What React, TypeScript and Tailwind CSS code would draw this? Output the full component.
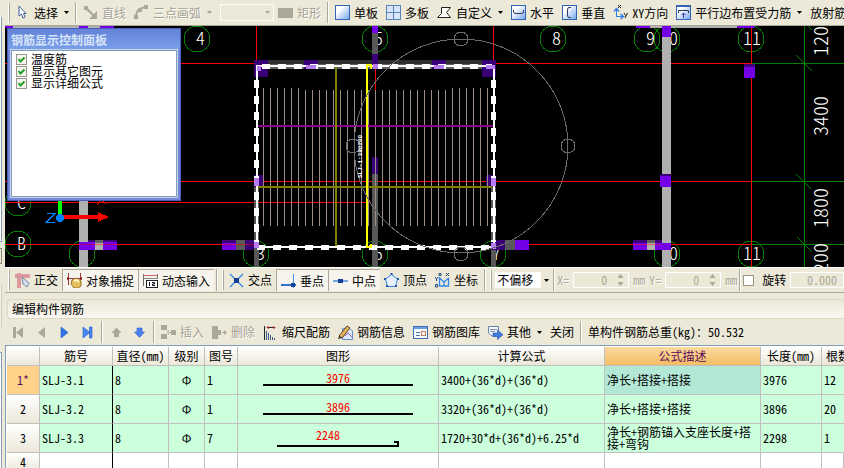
import { useState } from "react";
import type { ReactNode } from "react";

// ---------- icons ----------
const Icon = ({ children }: { children: ReactNode }) => (
  <svg width="15" height="15" viewBox="0 0 15 15" fill="none" className="shrink-0" aria-hidden="true">
    {children}
  </svg>
);

const CursorIcon = () => (
  <Icon>
    <path d="M4 1 L4 11 L6.5 9 L8 13 L10 12 L8.5 8.5 L11 8.5 Z" fill="#fff" stroke="#3b5f97" />
  </Icon>
);
const LineIcon = () => (
  <Icon>
    <rect x="1" y="1" width="4" height="4" fill="#aca899" />
    <path d="M4 4 L12 12" stroke="#aca899" strokeWidth="2.4" />
    <path d="M14 6 V14 H6 Z" fill="#aca899" />
  </Icon>
);
const ArcIcon = () => (
  <Icon>
    <path d="M2 12 C2 6 5 3 12 2" stroke="#aca899" strokeWidth="2" />
    <rect x="0" y="10" width="4" height="4" fill="#aca899" />
    <rect x="4" y="3" width="4" height="4" fill="#aca899" />
    <rect x="10" y="0" width="4" height="4" fill="#aca899" />
  </Icon>
);
const RectIcon = () => (
  <Icon>
    <rect x="0" y="3" width="15" height="10" fill="#aca899" />
  </Icon>
);
const BlueBox = () => (
  <>
    <defs>
      <linearGradient id="blueBox" x1="0" y1="0" x2="1" y2="1">
        <stop offset="0.3" stopColor="#ffffff" />
        <stop offset="1" stopColor="#6fa3ee" />
      </linearGradient>
    </defs>
    <rect x="0.5" y="0.5" width="14" height="14" fill="url(#blueBox)" stroke="#3564b4" />
  </>
);
const SlabIcon = () => (
  <Icon>
    <BlueBox />
  </Icon>
);
const MultiSlabIcon = () => (
  <Icon>
    <rect x="0.5" y="0.5" width="14" height="14" fill="#d8e6fa" stroke="#5b83bd" />
    <path d="M7.5 1 V14 M1 7.5 H14" stroke="#5b83bd" />
  </Icon>
);
const PolygonIcon = () => (
  <Icon>
    <path d="M4.5 2.5 H13.5 L9.5 7.5 L13.5 12.5 H0.5 L4.5 8.5 Z" fill="#fff" stroke="#222" />
  </Icon>
);
const HorizontalIcon = () => (
  <Icon>
    <BlueBox />
    <path d="M2.5 5 V7 Q2.5 8.5 5 8.5 H10 Q12.5 8.5 12.5 7 V5" stroke="#333a55" />
  </Icon>
);
const VerticalIcon = () => (
  <Icon>
    <BlueBox />
    <path d="M9 2.5 H7 Q5.5 2.5 5.5 5 V10 Q5.5 12.5 7 12.5 H9" stroke="#333a55" />
  </Icon>
);
const XYIcon = () => (
  <Icon>
    <path d="M3.5 12 V4 M3.5 11.5 H10" stroke="#2f7de0" />
    <path d="M1 6.5 L3.5 3.5 L6 6.5 M7.5 9 L10.5 11.5 L7.5 14" stroke="#2f7de0" strokeWidth="1.4" />
    <path d="M5 0 L8 3 M8 0 L5 3 M11 8 L12.5 10.5 M14.5 8 L12 13" stroke="#222" />
  </Icon>
);
const ParallelIcon = () => (
  <Icon>
    <BlueBox />
    <path d="M0 1 H15" stroke="#3564b4" strokeWidth="2" />
    <path d="M2.5 8 V5.5 H12.5 V8" stroke="#333a55" />
    <path d="M7.5 13 V8 M5.5 10 L7.5 8 L9.5 10" stroke="#3a3aa0" />
  </Icon>
);

const OrthoIcon = () => (
  <Icon>
    <path d="M0 3 H15 M4 0 V15" stroke="#dc9a9e" strokeWidth="4" />
    <path d="M7 4 L14 10 L12 14 L8 11 Z" fill="#d4dce8" stroke="#7a8ba8" />
  </Icon>
);
const SnapIcon = () => (
  <Icon>
    <path d="M1.5 0 V12 M13.5 0 V12 M0 5.5 H15" stroke="#a33b3b" />
    <path d="M0 4 L3 5.5 L0 7 Z M15 4 L12 5.5 L15 7 Z" fill="#7c1c1c" />
    <path d="M5 7 L9 5 L14 8 L14 13 L11 15 H7 L4 11 Z" fill="#e6c05a" stroke="#99752c" />
    <path d="M7 8 L10 7 L12 9" stroke="#fff2bd" strokeWidth="2" />
  </Icon>
);
const DynamicIcon = () => (
  <Icon>
    <path d="M0.5 1 V13 M14.5 1 V6" stroke="#6c6c6c" />
    <path d="M0 2.5 H15" stroke="#c96a6a" />
    <path d="M0 5.5 H15" stroke="#888" />
    <rect x="3.5" y="7.5" width="11" height="7" fill="#fff" stroke="#222" />
    <path d="M6.5 9 V13 M9 9.5 H11.5 V11 H9.5 V12.5 H12" stroke="#111" />
  </Icon>
);
const CrossIcon = () => (
  <Icon>
    <path d="M1 1 L14 14 M14 1 L1 14" stroke="#2f86e8" strokeWidth="1.3" />
    <rect x="5" y="5" width="5" height="5" fill="#123e94" />
  </Icon>
);
const PerpIcon = () => (
  <Icon>
    <path d="M0 12 H15" stroke="#2f6fd0" strokeWidth="2" />
    <path d="M12.5 1 V15" stroke="#3f97f5" />
    <rect x="10" y="10" width="4" height="4" fill="#123e94" />
  </Icon>
);
const MidIcon = () => (
  <Icon>
    <path d="M0 8 H15" stroke="#3f86e0" strokeWidth="1.4" />
    <rect x="5" y="6" width="5" height="4" fill="#123e94" />
  </Icon>
);
const VertexIcon = () => (
  <Icon>
    <path d="M7.5 1.5 L13.5 6 L11.5 13.5 H3.5 L1.5 6 Z" fill="#e8f1fb" stroke="#2f86e8" />
    <path d="M6.5 0 H8.5 V2 H6.5Z M0 5 H2 V7 H0Z M13 5 H15 V7 H13Z M2 12 H4 V14 H2Z M11 12 H13 V14 H11Z" fill="#2657a8" />
  </Icon>
);
const CoordIcon = () => (
  <Icon>
    <path d="M4.5 4 V13 H13.5 V5 M4.5 5 L9 9 L14 5 M9 9 V13 H4" stroke="#2f86e8" strokeWidth="1.3" />
    <path d="M0 4 L1.5 6 L3 4 M1.5 6 V8 M4 0.5 H6 V2.5 H4 Z M11 0 L14 3 M14 0 L11 3 M0.5 11.5 H2.5 V14 H0.5Z" stroke="#274a7a" />
  </Icon>
);

const FirstIcon = () => (
  <Icon>
    <path d="M2 2 H5 V13 H2Z M12 2 V13 L5 7.5Z" fill="#aca899" />
  </Icon>
);
const PrevIcon = () => (
  <Icon>
    <path d="M11 2 V13 L4 7.5Z" fill="#aca899" />
  </Icon>
);
const NextIcon = () => (
  <Icon>
    <path d="M4 2 V13 L11 7.5Z" fill="#2f74e8" stroke="#1d54c4" strokeWidth="0.6" />
  </Icon>
);
const LastIcon = () => (
  <Icon>
    <path d="M3 2 V13 L10 7.5Z M9.5 2 H12 V13 H9.5Z" fill="#4a8af0" stroke="#1d54c4" strokeWidth="0.6" />
  </Icon>
);
const UpIcon = () => (
  <Icon>
    <path d="M7.5 2.5 L12.5 8 H10 V12 H5 V8 H2.5Z" fill="#aca899" />
  </Icon>
);
const DownIcon = () => (
  <Icon>
    <path d="M7.5 12.5 L12.5 7 H10 V3 H5 V7 H2.5Z" fill="#4a80ea" stroke="#2d5fd0" strokeWidth="0.6" />
  </Icon>
);
const InsertIcon = () => (
  <Icon>
    <path d="M0 0 H6 V5 H0Z M0 9 H6 V14 H0Z M10 5 H15 V10 H10Z M5 7 H10 V8 H5Z M8 5 L5 7.5 L8 10Z" fill="#aca899" />
  </Icon>
);
const DeleteIcon = () => (
  <Icon>
    <path d="M0 1 H6 V5 H9 V10 H6 V14 H0Z M10 7 H15 V8 H10Z M12 5 L15 7.5 L12 10Z" fill="#aca899" />
  </Icon>
);
const ScaleIcon = () => (
  <Icon>
    <path d="M1.5 1 V15 M4 2.5 H12" stroke="#222" />
    <path d="M3 2.5 L6 1 V4Z M13 2.5 L10 1 V4Z" fill="#b32a2a" />
    <path d="M3.5 6 V15 M5.5 8 V15 M7.5 10 V15 M9.5 12 V15 M11.5 13 V15" stroke="#3d5a86" />
  </Icon>
);
const InfoIcon = () => (
  <Icon>
    <path d="M4.5 3.5 H12 L14.5 6 V14.5 H4.5Z" fill="#dce9fb" stroke="#6a8cc0" />
    <path d="M1 11 L9 1 L12 3 L4 13 Z" fill="#e7b558" stroke="#5a3d25" />
    <path d="M1 11 L0 14 L4 13Z" fill="#333" />
    <path d="M7 11 L10 8 L14 12" stroke="#9b62b5" />
  </Icon>
);
const LibraryIcon = () => (
  <Icon>
    <rect x="0.5" y="1.5" width="14" height="12" fill="#f4f8ff" stroke="#3f6db5" />
    <path d="M1 3 H14" stroke="#6e9ce0" strokeWidth="2" />
    <path d="M3 7.5 H7 M3 10.5 H7" stroke="#4a6fa5" />
    <rect x="8.5" y="6.5" width="4" height="4" fill="#fff" stroke="#c07c5a" />
  </Icon>
);
const OtherIcon = () => (
  <Icon>
    <path d="M0.5 1.5 H10.5 V11 H4 L0.5 8Z" fill="#f5f8fd" stroke="#6b83ab" />
    <path d="M2 4.5 H9 M2 6.5 H7" stroke="#7d90b0" />
    <path d="M5 8 H9.5 V5 L15 9.7 L9.5 14.5 V11.5 H5Z" fill="#3f7ce0" stroke="#2553a8" strokeWidth="0.6" />
  </Icon>
);

const Caret = () => (
  <svg width="5" height="3" viewBox="0 0 5 3" className="shrink-0" aria-hidden="true">
    <path d="M0 0 H5 L2.5 3 Z" fill="currentColor" />
  </svg>
);

// ---------- toolbar parts ----------
type ToolProps = {
  icon?: ReactNode;
  label?: string;
  name?: string;
  caret?: boolean;
  disabled?: boolean;
  pressed?: boolean;
};

function Tool({ icon, label, name, caret, disabled, pressed }: ToolProps) {
  return (
    <button
      type="button"
      disabled={disabled}
      aria-label={name}
      aria-pressed={pressed}
      className={
        "flex h-full shrink-0 items-center gap-1 px-1 whitespace-nowrap disabled:text-[#a5a192] disabled:text-shadow-[1px_1px_0_#fff] " +
        (pressed ? "border-t border-l border-[#aca899] bg-[#f6f4ec]" : "")
      }
    >
      {icon}
      {label && <span>{label}</span>}
      {caret && (
        <span className="ml-0.5">
          <Caret />
        </span>
      )}
    </button>
  );
}

const Separator = () => <span className="mx-0.5 h-full w-0.5 shrink-0 border-l border-[#aca899] bg-white" />;
const Grip = () => <span className="mr-px ml-0.5 h-5 w-0.5 shrink-0 border-r border-[#aca899] bg-white" />;

function OffsetField({ label, id }: { label: string; id: string }) {
  return (
    <div className="flex shrink-0 items-center gap-1 text-[#aca899]">
      <label htmlFor={id} className="text-shadow-[1px_1px_0_#fff]">{label}</label>
      <span className="flex h-4 w-14 items-center border border-white pr-1">
        <input id={id} type="text" disabled defaultValue="0" className="w-full min-w-0 pr-2.5 text-right" />
        <svg width="7" height="12" viewBox="0 0 7 12" className="shrink-0" aria-hidden="true">
          <path d="M0.5 4 H6.5 L3.5 0 Z M0.5 8 H6.5 L3.5 12 Z" fill="#aca899" />
        </svg>
      </span>
      <span className="text-shadow-[1px_1px_0_#fff]">mm</span>
    </div>
  );
}

// ---------- drawing area ----------
const axisCircles = [
  [197, 39], [375, 39], [553, 39], [647, 39], [667, 39], [751, 39],
  [18, 203], [18, 244], [82, 254], [256, 254], [375, 254], [493, 254], [667, 254], [751, 254],
];

const axisLabels = [
  { x: 196, y: 45, t: "4" },
  { x: 374, y: 45, t: "5" },
  { x: 552, y: 45, t: "8" },
  { x: 646, y: 45, t: "9" },
  { x: 669, y: 45, t: "0" },
  { x: 743, y: 45, t: "11" },
  { x: 17, y: 209, t: "C" },
  { x: 17, y: 250, t: "B" },
  { x: 80, y: 261, t: "2" },
  { x: 256, y: 260, t: "3" },
  { x: 374, y: 260, t: "5" },
  { x: 492, y: 260, t: "7" },
  { x: 669, y: 260, t: "0" },
  { x: 743, y: 260, t: "11" },
];

const dimensions = [
  { y: 56, t: "1200" },
  { y: 136, t: "3400" },
  { y: 228, t: "1800" },
  { y: 283, t: "1200" },
];

// x, y, width, height, colour
const beams: [number, number, number, number, string][] = [
  [5, 26, 95, 2, "#b0b0b0"],
  [5, 26, 8, 2, "#7300e6"],
  [79, 26, 9, 2, "#7300e6"],
  [100, 26, 14, 2, "#7300e6"],
  [79, 200, 9, 67, "#b0b0b0"],
  [88, 240, 29, 3, "#3d007a"],
  [79, 242, 38, 8, "#7300e6"],
  [95, 240, 8, 3, "#606060"],
  [95, 243, 8, 7, "#b0b0b0"],
  [222, 240, 14, 3, "#3d007a"],
  [222, 243, 14, 7, "#7300e6"],
  [236, 240, 9, 10, "#585858"],
  [245, 240, 14, 10, "#3a0078"],
  [650, 26, 88, 2, "#b0b0b0"],
  [636, 26, 14, 2, "#7300e6"],
  [737, 26, 18, 2, "#7300e6"],
  [662, 26, 9, 241, "#b0b0b0"],
  [662, 26, 9, 11, "#7300e6"],
  [660, 174, 11, 2, "#3d007a"],
  [660, 176, 11, 11, "#7300e6"],
  [744, 64, 11, 3, "#3d007a"],
  [744, 67, 11, 11, "#7300e6"],
  [633, 240, 29, 3, "#3d007a"],
  [633, 243, 38, 7, "#7300e6"],
  [647, 240, 8, 3, "#606060"],
  [647, 243, 8, 7, "#b0b0b0"],
  [268, 60, 214, 4, "#303030"],
  [268, 64, 214, 5, "#606060"],
  [254, 187, 5, 80, "#585858"],
  [491, 187, 5, 80, "#585858"],
  [372, 26, 6, 28, "#585858"],
  [372, 26, 6, 7, "#7300e6"],
  [372, 54, 6, 12, "#3a0078"],
  [372, 157, 6, 17, "#3a0078"],
  [372, 174, 6, 93, "#585858"],
  [254, 60, 14, 17, "#3a0078"],
  [304, 60, 14, 9, "#3a0078"],
  [432, 60, 14, 9, "#3a0078"],
  [482, 60, 14, 17, "#3a0078"],
  [254, 175, 10, 12, "#3a0078"],
  [486, 175, 10, 12, "#3a0078"],
  [491, 240, 14, 10, "#3a0078"],
  [505, 240, 10, 10, "#585858"],
  [515, 240, 14, 10, "#7300e6"],
];

const highlights = [
  [257, 66, 4, 5], [306, 65, 10, 4], [434, 65, 10, 4], [486, 65, 9, 4],
  [254, 178, 5, 8], [491, 178, 5, 8], [373, 64, 5, 5], [254, 242, 5, 6], [491, 243, 5, 6],
];

const handles = [[461, 39], [568, 146], [461, 254], [353, 146]];

const stirrups = Array.from({ length: 33 }, (_, i) => 263 + i * 7);

function Drawing() {
  return (
    <svg className="block h-full w-full" role="img" aria-label="板钢筋平面图">
      <g transform="translate(-5 -26)" shapeRendering="crispEdges" fill="none">
        <g stroke="#008000">
          {axisCircles.map(([x, y], i) => (
            <circle key={i} cx={x} cy={y} r="13" />
          ))}
          <path d="M751 63.5 H2000 M751 181.5 H2000 M751 244.5 H2000 M804.5 26 V267" />
          <path d="M796 55 L812 71 M796 174 L811 189 M797 237 L812 252 M808 26 L812 30" />
        </g>
        <g fill="#fff" className="font-light">
          {axisLabels.map((a, i) => (
            <text key={i} x={a.x} y={a.y} className="text-lg">{a.t}</text>
          ))}
          {dimensions.map((d) => (
            <text key={d.y} transform={`translate(828 ${d.y}) rotate(-90)`} className="text-xl">{d.t}</text>
          ))}
        </g>
        <g stroke="#f00">
          <path d="M5 63.5 H751 M5 181.5 H751 M5 202.5 H371 M5 244.5 H254 M491 244.5 H751" />
          <path d="M256.5 26 V63 M375.5 66 V90 M493.5 26 V63 M751.5 26 V267" />
        </g>
        {beams.map(([x, y, w, h, c], i) => (
          <rect key={i} x={x} y={y} width={w} height={h} fill={c} />
        ))}
        <path d="M5 244.5 H254 M529 244.5 H660" stroke="#f00" strokeOpacity="0.5" />

        <g stroke="#9c8c88">
          {stirrups.map((x, i) => (
            <path key={x} d={`M${x}.5 ${i < 6 || i > 26 ? 88 : 90} V226`} />
          ))}
        </g>
        <path d="M257 126 H494" stroke="#8b008b" strokeWidth="2" />
        <path d="M258 187 H492 M336 66 V246" stroke="#808000" strokeWidth="2" />

        {/* selected slab outline */}
        <path d="M257 66 H494 V247 H257 Z" stroke="#fff" strokeWidth="2" />
        <path d="M262 66.5 H492 M257 247.5 H492" stroke="#fff" strokeWidth="5" strokeDasharray="8 8" />
        <path d="M256.5 80 V242 M493.5 80 V242" stroke="#fff" strokeWidth="5" strokeDasharray="8 8" />
        {highlights.map(([x, y, w, h], i) => (
          <rect key={i} x={x} y={y} width={w} height={h} fill="#b87cf2" />
        ))}
        <path d="M367 64 V248 M368 65 H371 V69 M368 247 H371 V244" stroke="#ff0" strokeWidth="2" />

        <g stroke="#6a6a6a">
          <circle cx="461" cy="146" r="107" />
          {handles.map(([x, y]) => (
            <circle key={`${x}-${y}`} cx={x} cy={y} r="7" />
          ))}
        </g>
        <text
          transform="translate(362 178) rotate(-90)"
          fill="#fff"
          className="font-['Liberation_Mono',monospace] text-[6px] font-bold"
        >
          SLJ-1:38@200
        </text>

        {/* coordinate axes */}
        <path d="M60 200 V215" stroke="#0f0" strokeWidth="4" />
        <path d="M62 217 H99" stroke="#f00" strokeWidth="4" />
        <path d="M98 212 L109 217 L98 222 Z" fill="#f00" />
        <path d="M97 205 L101 200 L106 204" stroke="#f00" />
        <circle cx="60" cy="218" r="4" fill="#0080ff" />
        <path d="M47 213.5 H55 L46 222.5 H55" stroke="#0080ff" />
      </g>
    </svg>
  );
}

function DisplayPanel() {
  const options = ["温度筋", "显示其它图元", "显示详细公式"];
  return (
    <section className="absolute top-0.5 left-0.5 flex h-[173px] w-[174px] flex-col border border-[#4a5fb8] bg-[#7386dc] px-[3px] pb-[3px]">
      <h2 className="-mx-[3px] flex h-[21px] items-center bg-linear-to-b from-[#6382d8] to-[#7ba0ea] px-[3px] font-bold text-[#d6e4f8]">
        钢筋显示控制面板
      </h2>
      <ul className="flex-1 border border-[#7f9db9] bg-white pt-0.5 pl-1 shadow-[0_0_0_1px_#c8d4ea]">
        {options.map((o) => (
          <li key={o}>
            <label className="flex h-3 items-center gap-1 leading-3">
              <span className="relative flex">
                <input
                  type="checkbox"
                  defaultChecked
                  className="peer h-[11px] w-[11px] appearance-none border border-[#9a9687] bg-[#f4f3ee]"
                />
                <svg
                  viewBox="0 0 11 11"
                  className="pointer-events-none absolute inset-0 hidden peer-checked:block"
                  aria-hidden="true"
                >
                  <path d="M2.5 5 L4.5 7.5 L8.5 3.5" fill="none" stroke="#21a121" strokeWidth="2" />
                </svg>
              </span>
              {o}
            </label>
          </li>
        ))}
      </ul>
    </section>
  );
}

// ---------- table ----------
type Bar = {
  id: string;
  dia: string;
  shape: string;
  length: string;
  hook?: boolean;
  formula: string;
  desc: string;
  total: string;
  count: string;
};

const bars: Bar[] = [
  { id: "SLJ-3.1", dia: "8", shape: "1", length: "3976", formula: "3400+(36*d)+(36*d)", desc: "净长+搭接+搭接", total: "3976", count: "12" },
  { id: "SLJ-3.2", dia: "8", shape: "1", length: "3896", formula: "3320+(36*d)+(36*d)", desc: "净长+搭接+搭接", total: "3896", count: "20" },
  { id: "SLJ-3.3", dia: "8", shape: "7", length: "2248", hook: true, formula: "1720+30*d+(36*d)+6.25*d", desc: "净长+钢筋锚入支座长度+搭接+弯钩", total: "2298", count: "1" },
];

const cell = "border-r border-b border-[#c0c0c0] px-0.5";
const headCell = "border-r border-b border-[#c0c0c0] bg-linear-to-b from-white to-[#ebe8d8] font-normal whitespace-nowrap";

function BarShape({ bar }: { bar: Bar }) {
  return (
    <div className="flex flex-col items-center text-[#f00]">
      <span className={"leading-[10px] " + (bar.hook ? "pr-5" : "")}>{bar.length}</span>
      {bar.hook ? (
        <svg width="122" height="7" viewBox="0 0 122 7" aria-hidden="true">
          <path d="M117 2 H121 V6 H0" fill="none" stroke="#000" strokeWidth="2" />
        </svg>
      ) : (
        <svg width="150" height="4" viewBox="0 0 150 4" aria-hidden="true">
          <path d="M0 2 H150" stroke="#000" strokeWidth="2" />
        </svg>
      )}
    </div>
  );
}

function BarTable() {
  const [selected, setSelected] = useState(0);
  return (
    <table className="w-full table-fixed border-separate border-spacing-0">
      <colgroup>
        <col className="w-[33px]" />
        <col className="w-[73px]" />
        <col className="w-[56px]" />
        <col className="w-[36px]" />
        <col className="w-[33px]" />
        <col className="w-[201px]" />
        <col className="w-[166px]" />
        <col className="w-[156px]" />
        <col className="w-[61px]" />
        <col />
      </colgroup>
      <thead>
        <tr className="h-[19px]">
          <th className={headCell} />
          <th className={headCell}>筋号</th>
          <th className={headCell}>直径(mm)</th>
          <th className={headCell}>级别</th>
          <th className={headCell}>图号</th>
          <th className={headCell}>图形</th>
          <th className={headCell}>计算公式</th>
          <th className="border-r border-b border-[#c0c0c0] bg-linear-to-b from-[#fbd9a0] to-[#f3bd62] font-normal text-[#5c0a5c]">
            公式描述
          </th>
          <th className={headCell}>长度(mm)</th>
          <th className="border-b border-[#c0c0c0] bg-linear-to-b from-white to-[#ebe8d8] pl-1 text-left font-normal whitespace-nowrap">
            根数
          </th>
        </tr>
      </thead>
      <tbody>
        {bars.map((b, i) => (
          <tr key={b.id} className="h-[29px] bg-[#ccffdc]" onClick={() => setSelected(i)}>
            <th
              className={
                "border-r border-b border-[#c0c0c0] font-normal " +
                (i === selected ? "bg-[#ffd28a] text-[#5c0a5c]" : "bg-linear-to-b from-white to-[#ebe8d8]")
              }
            >
              {i + 1}
              {i === selected && "*"}
            </th>
            <td className="border-r border-b border-r-black border-b-[#c0c0c0] px-0.5">{b.id}</td>
            <td className={cell}>{b.dia}</td>
            <td className={cell + " text-center"}>Φ</td>
            <td className={cell}>{b.shape}</td>
            <td className={cell}>
              <BarShape bar={b} />
            </td>
            <td className={cell}>{b.formula}</td>
            <td className={cell + " leading-3 " + (i === selected ? "bg-[#b4e8d6]" : "")}>{b.desc}</td>
            <td className={cell}>{b.total}</td>
            <td className="border-b border-[#c0c0c0] px-0.5">{b.count}</td>
          </tr>
        ))}
        <tr className="h-[19px] bg-white">
          <th className={headCell}>4</th>
          <td className="border-r border-b border-r-black border-b-[#c0c0c0]" />
          {Array.from({ length: 8 }, (_, i) => (
            <td key={i} className={cell} />
          ))}
        </tr>
      </tbody>
    </table>
  );
}

export default function App() {
  return (
    <div className="flex h-screen overflow-hidden bg-[#ece9d8] font-['Noto_Sans_CJK_SC',sans-serif] text-xs leading-4 text-black [font-feature-settings:'hwid']">
      {/* edge of the navigation pane */}
      <aside className="flex w-[5px] shrink-0 flex-col">
        <div className="mt-[17px] h-[225px] w-0.5 border-r border-b border-[#7f9db9] bg-white" />
        <div className="mt-1.5 h-4 w-0.5 border-y border-r border-[#8a8778]" />
        <div className="mt-5 h-11 w-0.5 rounded-r border-r border-[#d0ccb8] bg-[#f4f2e8]" />
        <div className="mt-6 w-0.5 flex-1 border-t border-r border-[#7f9db9] bg-white" />
      </aside>

      <main className="flex min-w-0 flex-1 flex-col">
        <div className="flex h-[26px] shrink-0 items-center overflow-hidden border-b border-[#aca899] py-0.5 pl-px">
          <Grip />
          <Tool icon={<CursorIcon />} label="选择" caret />
          <Separator />
          <Tool icon={<LineIcon />} label="直线" disabled />
          <Tool icon={<ArcIcon />} label="三点画弧" caret disabled />
          <label className="relative ml-1 flex shrink-0 items-center text-[#aca899]">
            <select disabled aria-label="画弧方式" className="h-[17px] w-[54px] appearance-none border border-white" />
            <span className="pointer-events-none absolute right-1">
              <Caret />
            </span>
          </label>
          <Tool icon={<RectIcon />} label="矩形" disabled />
          <Separator />
          <Tool icon={<SlabIcon />} label="单板" />
          <Tool icon={<MultiSlabIcon />} label="多板" />
          <Tool icon={<PolygonIcon />} label="自定义" caret />
          <Tool icon={<HorizontalIcon />} label="水平" />
          <Tool icon={<VerticalIcon />} label="垂直" />
          <Tool icon={<XYIcon />} label="XY方向" />
          <Tool icon={<ParallelIcon />} label="平行边布置受力筋" caret />
          <Tool label="放射筋" />
        </div>

        <div className="relative h-[241px] shrink-0 overflow-hidden bg-black">
          <Drawing />
          <DisplayPanel />
        </div>

        <div className="flex h-[26px] shrink-0 items-center overflow-hidden border-t border-b border-t-white border-b-[#aca899] py-px pl-px">
          <Grip />
          <Tool icon={<OrthoIcon />} label="正交" />
          <Tool icon={<SnapIcon />} label="对象捕捉" pressed />
          <Tool icon={<DynamicIcon />} label="动态输入" pressed />
          <Separator />
          <Grip />
          <Tool icon={<CrossIcon />} label="交点" />
          <Tool icon={<PerpIcon />} label="垂点" pressed />
          <Tool icon={<MidIcon />} label="中点" pressed />
          <Tool icon={<VertexIcon />} label="顶点" />
          <Tool icon={<CoordIcon />} label="坐标" />
          <Separator />
          <Grip />
          <label className="relative ml-0.5 flex shrink-0 items-center">
            <select aria-label="偏移方式" className="h-4 w-14 appearance-none bg-white pl-0.5 leading-4">
              <option>不偏移</option>
            </select>
            <span className="pointer-events-none absolute right-0 flex h-4 w-2.5 items-center justify-center bg-[#ece9d8]">
              <Caret />
            </span>
          </label>
          <Separator />
          <div className="flex items-center gap-1">
            <OffsetField id="offset-x" label="X=" />
            <OffsetField id="offset-y" label="Y=" />
          </div>
          <Separator />
          <label className="flex shrink-0 items-center gap-2">
            <input type="checkbox" className="h-[11px] w-[11px] appearance-none border border-[#9a9687] bg-white checked:bg-[#21a121]" />
            旋转
          </label>
          <input
            type="text"
            aria-label="旋转角度"
            disabled
            defaultValue="0.000"
            className="ml-1 h-4 min-w-12 flex-1 border border-white pr-1.5 text-right text-[#aca899]"
          />
        </div>

        <h1 className="mt-1.5 ml-0.5 h-5 shrink-0 rounded-l border border-r-0 border-[#ddd8c0] bg-linear-to-b from-[#ece9d8] to-[#f8f7f1] pl-1 leading-[18px]">
          编辑构件钢筋
        </h1>

        <div className="flex h-[26px] shrink-0 items-center overflow-hidden py-0.5 pl-0.5">
          <Tool icon={<FirstIcon />} name="第一条" disabled />
          <Tool icon={<PrevIcon />} name="上一条" disabled />
          <Tool icon={<NextIcon />} name="下一条" />
          <Tool icon={<LastIcon />} name="最后一条" />
          <Separator />
          <Tool icon={<UpIcon />} name="上移" disabled />
          <Tool icon={<DownIcon />} name="下移" />
          <Separator />
          <Tool icon={<InsertIcon />} label="插入" disabled />
          <Tool icon={<DeleteIcon />} label="删除" disabled />
          <Tool icon={<ScaleIcon />} label="缩尺配筋" />
          <Tool icon={<InfoIcon />} label="钢筋信息" />
          <Tool icon={<LibraryIcon />} label="钢筋图库" />
          <Tool icon={<OtherIcon />} label="其他" caret />
          <Tool label="关闭" />
          <Separator />
          <p className="pl-1 whitespace-nowrap">单构件钢筋总重(kg)：50.532</p>
        </div>

        <div className="min-h-0 flex-1 overflow-hidden border-t border-l border-[#7f9db9] bg-white pt-px pl-px">
          <BarTable />
        </div>
      </main>
    </div>
  );
}
